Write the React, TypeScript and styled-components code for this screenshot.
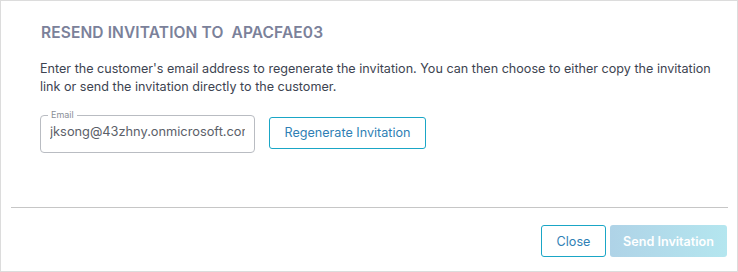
import React, {useState} from 'react';
import styled, {createGlobalStyle} from 'styled-components';

const GlobalStyle = createGlobalStyle`
  html, body {
    margin: 0;
    padding: 0;
    background: #ffffff;
  }
  body {
    font-family: Inter, "Noto Sans", "Liberation Sans", sans-serif;
  }
`;

export default function App() {
  const [email, setEmail] = useState('jksong@43zhny.onmicrosoft.com');

  return (
    <>
      <GlobalStyle />
      <Dialog>
        <Body>
          <Title>RESEND INVITATION TO&nbsp; APACFAE03</Title>
          <Description>
            Enter the customer's email address to regenerate the invitation.
            You can then choose to either copy the invitation link or send the
            invitation directly to the customer.
          </Description>
          <FormRow>
            <Field>
              <Legend>Email</Legend>
              <Input value={email} onChange={e => setEmail(e.target.value)} />
            </Field>
            <OutlineButton width={157}>Regenerate Invitation</OutlineButton>
          </FormRow>
        </Body>
        <Divider />
        <Footer>
          <OutlineButton width={65}>Close</OutlineButton>
          <PrimaryButton disabled>Send Invitation</PrimaryButton>
        </Footer>
      </Dialog>
    </>
  );
}

const Dialog = styled.div`
  box-sizing: border-box;
  width: 738px;
  height: 272px;
  border: 1px solid #dcdcdc;
  background: #fff;
  display: flex;
  flex-direction: column;
`;

const Body = styled.div`
  padding: 23px 18px 0 39px;
  flex: 1;
`;

const Title = styled.h2`
  margin: 0 0 0 1px;
  font-size: 15.5px;
  line-height: 18px;
  font-weight: 600;
  color: #7b819a;
  letter-spacing: 0.12px;
`;

const Description = styled.p`
  margin: 18px 0 0;
  font-size: 12.6px;
  line-height: 18px;
  color: #3d4451;
`;

const FormRow = styled.div`
  display: flex;
  align-items: center;
  gap: 14px;
  margin-top: 15px;
`;

const Field = styled.fieldset`
  box-sizing: border-box;
  margin: 0;
  width: 215px;
  height: 43px;
  padding: 0 9px;
  border: 1px solid #b9bcc2;
  border-radius: 4px;
  position: relative;
  top: -1px;
`;

const Legend = styled.legend`
  font-size: 9px;
  line-height: 10px;
  color: #8a8f98;
  padding: 0 3px;
  margin-left: -2px;
`;

const Input = styled.input`
  box-sizing: border-box;
  border: none;
  outline: none;
  width: 100%;
  padding: 3px 0 0;
  font-family: inherit;
  font-size: 12.8px;
  color: #5b6069;
  background: transparent;
`;

const OutlineButton = styled.button<{width: number}>`
  box-sizing: border-box;
  height: 32px;
  width: ${p => p.width}px;
  padding: 0;
  border: 1px solid #1aa6c6;
  border-radius: 3px;
  background: #fff;
  font-family: inherit;
  font-size: 12.6px;
  color: #2f7fb5;
  cursor: pointer;
`;

const Divider = styled.hr`
  margin: 0 9px 0 10px;
  border: none;
  border-top: 1px solid #c6c6c6;
`;

const Footer = styled.div`
  display: flex;
  justify-content: flex-end;
  gap: 4px;
  padding: 17px 10px 14px;
`;

const PrimaryButton = styled.button`
  box-sizing: border-box;
  height: 32px;
  width: 117px;
  border: none;
  border-radius: 3px;
  background: linear-gradient(90deg, #afd3e7 0%, #b4e6ef 100%);
  font-family: inherit;
  font-size: 12.6px;
  font-weight: 600;
  color: #ffffff;
  cursor: default;
`;
